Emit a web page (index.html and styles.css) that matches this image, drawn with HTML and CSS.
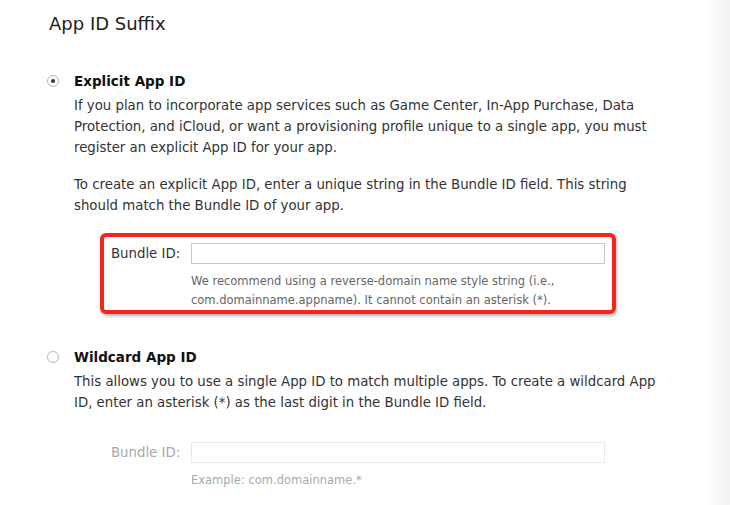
FILE: index.html
```html
<!DOCTYPE html>
<html>
<head>
<meta charset="utf-8">
<link rel="stylesheet" href="styles.css">
</head>
<body>
<div class="page">
  <div class="content">
    <h2 class="title">App ID Suffix</h2>

    <div class="option">
      <div class="option-head">
        <span class="radio checked"></span>
        <span class="option-name">Explicit App ID</span>
      </div>
      <div class="option-body">
        <p class="desc">If you plan to incorporate app services such as Game Center, In-App Purchase, Data Protection, and iCloud, or want a provisioning profile unique to a single app, you must register an explicit App ID for your app.</p>
        <p class="desc">To create an explicit App ID, enter a unique string in the Bundle ID field. This string should match the Bundle ID of your app.</p>
        <div class="field-box highlight">
          <div class="field-row">
            <label class="field-label">Bundle ID:</label>
            <div class="field-main">
              <div class="input"></div>
              <p class="hint">We recommend using a reverse-domain name style string (i.e., com.domainname.appname). It cannot contain an asterisk (*).</p>
            </div>
          </div>
        </div>
      </div>
    </div>

    <div class="option second">
      <div class="option-head">
        <span class="radio"></span>
        <span class="option-name">Wildcard App ID</span>
      </div>
      <div class="option-body">
        <p class="desc">This allows you to use a single App ID to match multiple apps. To create a wildcard App ID, enter an asterisk (*) as the last digit in the Bundle ID field.</p>
        <div class="field-box disabled">
          <div class="field-row">
            <label class="field-label">Bundle ID:</label>
            <div class="field-main">
              <div class="input"></div>
              <p class="hint">Example: com.domainname.*</p>
            </div>
          </div>
        </div>
      </div>
    </div>
  </div>
  <div class="edge"></div>
</div>
</body>
</html>
```
FILE: styles.css
```css
html, body {
  margin: 0;
  padding: 0;
  background: #fff;
}
body {
  font-family: "DejaVu Sans", "Liberation Sans", sans-serif;
  color: #333;
  width: 730px;
  height: 505px;
  overflow: hidden;
}
.page {
  display: flex;
  height: 505px;
}
.content {
  flex: 1;
  padding: 13px 0 0 49px;
}
.edge {
  width: 26px;
  background: linear-gradient(to right, #ffffff, #f3f3f3);
}
.title {
  margin: 0;
  font-size: 18px;
  font-weight: normal;
  color: #222;
  line-height: 22px;
}
.option {
  margin-top: 36px;
}
.option.second {
  margin-top: 33px;
}
.option-head {
  display: flex;
  align-items: center;
  height: 20px;
}
.radio {
  width: 10px;
  height: 10px;
  border: 1px solid #b5b5b5;
  border-radius: 50%;
  margin-left: -2px;
  margin-right: 15px;
  display: flex;
  align-items: center;
  justify-content: center;
  background: #fff;
}
.radio.checked::after {
  content: "";
  width: 4px;
  height: 4px;
  border-radius: 50%;
  background: #333;
}
.option-name {
  font-weight: bold;
  font-size: 13.5px;
  color: #111;
}
.option-body {
  padding-left: 25px;
}
.desc {
  margin: 4px 0 0 0;
  font-size: 13.3px;
  line-height: 21px;
  width: 586px;
}
.desc + .desc {
  margin-top: 16px;
}
.field-box {
  margin-top: 17px;
  margin-left: 26px;
  width: 516px;
  box-sizing: border-box;
  padding: 6px 7px 0 7px;
}
.field-box.highlight {
  border: 4px solid #f4261c;
  border-radius: 6px;
  box-shadow: 1px 2px 3px rgba(0,0,0,0.3);
}
.field-box.disabled {
  margin-top: 19px;
  border: 4px solid transparent;
}
.field-row {
  display: flex;
}
.field-label {
  width: 80px;
  font-size: 13.3px;
  line-height: 21px;
  color: #333;
}
.disabled .field-label {
  color: #a8a8a8;
}
.field-main {
  flex: 1;
}
.input {
  height: 19px;
  border: 1px solid #c8c8c8;
  background: #fff;
}
.disabled .input {
  border-color: #e8e8e8;
}
.hint {
  margin: 8px 0 0 0;
  font-size: 11.5px;
  line-height: 19px;
  color: #666;
}
.disabled .hint {
  color: #aaa;
}
```
